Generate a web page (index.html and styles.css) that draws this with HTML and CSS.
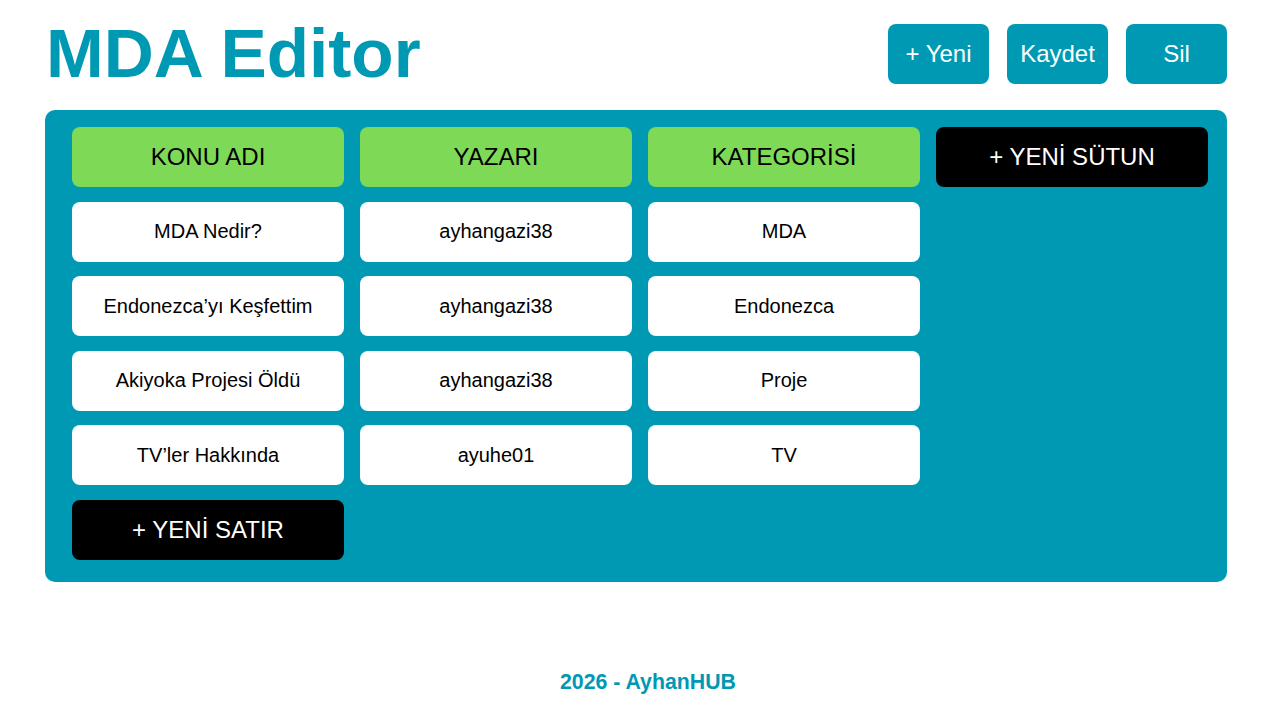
FILE: index.html
```html
<!DOCTYPE html>
<html lang="tr">
<head>
<meta charset="utf-8">
<title>MDA Editor</title>
<link rel="stylesheet" href="styles.css">
</head>
<body>
<div class="page">
  <header class="topbar">
    <h1 class="title">MDA Editor</h1>
    <div class="actions">
      <button class="btn">+ Yeni</button>
      <button class="btn">Kaydet</button>
      <button class="btn">Sil</button>
    </div>
  </header>
  <main class="panel">
    <div class="grid">
      <div class="cell head">KONU ADI</div>
      <div class="cell head">YAZARI</div>
      <div class="cell head">KATEGORİSİ</div>
      <div class="cell dark">+ YENİ SÜTUN</div>

      <div class="cell">MDA Nedir?</div>
      <div class="cell">ayhangazi38</div>
      <div class="cell">MDA</div>
      <div class="spacer"></div>

      <div class="cell">Endonezca’yı Keşfettim</div>
      <div class="cell">ayhangazi38</div>
      <div class="cell">Endonezca</div>
      <div class="spacer"></div>

      <div class="cell">Akiyoka Projesi Öldü</div>
      <div class="cell">ayhangazi38</div>
      <div class="cell">Proje</div>
      <div class="spacer"></div>

      <div class="cell">TV’ler Hakkında</div>
      <div class="cell">ayuhe01</div>
      <div class="cell">TV</div>
      <div class="spacer"></div>

      <div class="cell dark">+ YENİ SATIR</div>
    </div>
  </main>
  <footer class="footer">2026 - AyhanHUB</footer>
</div>
</body>
</html>
```
FILE: styles.css
```css
* { box-sizing: border-box; }
html, body {
  margin: 0;
  padding: 0;
  background: #ffffff;
  font-family: "Liberation Sans", Arial, sans-serif;
}
.page {
  width: 1280px;
  height: 720px;
  display: flex;
  flex-direction: column;
}
.topbar {
  margin: 0 53px 0 45px;
  height: 110px;
  display: flex;
  align-items: flex-start;
  justify-content: space-between;
}
.title {
  margin: 13px 0 0 1px;
  font-size: 69.3px;
  line-height: 80px;
  font-weight: bold;
  color: #0099b3;
}
.actions {
  display: flex;
  gap: 18px;
  margin-top: 24px;
}
.btn {
  width: 101px;
  height: 60px;
  border: none;
  border-radius: 8px;
  background: #0099b3;
  color: #ffffff;
  font-family: "Liberation Sans", Arial, sans-serif;
  font-size: 24px;
  padding: 0;
}
.panel {
  margin: 0 53px 0 45px;
  height: 472px;
  background: #0099b3;
  border-radius: 10px;
  padding: 17px 19px 0 27px;
}
.grid {
  display: grid;
  grid-template-columns: repeat(4, 272px);
  grid-auto-rows: 60px;
  column-gap: 16px;
  row-gap: 14.6px;
}
.cell {
  background: #ffffff;
  border-radius: 8px;
  display: flex;
  align-items: center;
  justify-content: center;
  font-size: 20px;
  color: #000000;
}
.cell.head {
  background: #7ed957;
  font-size: 24px;
}
.cell.dark {
  background: #000000;
  color: #ffffff;
  font-size: 24px;
}
.footer {
  margin-top: 88px;
  padding-left: 16px;
  text-align: center;
  color: #0099b3;
  font-weight: bold;
  font-size: 21.3px;
}
```
